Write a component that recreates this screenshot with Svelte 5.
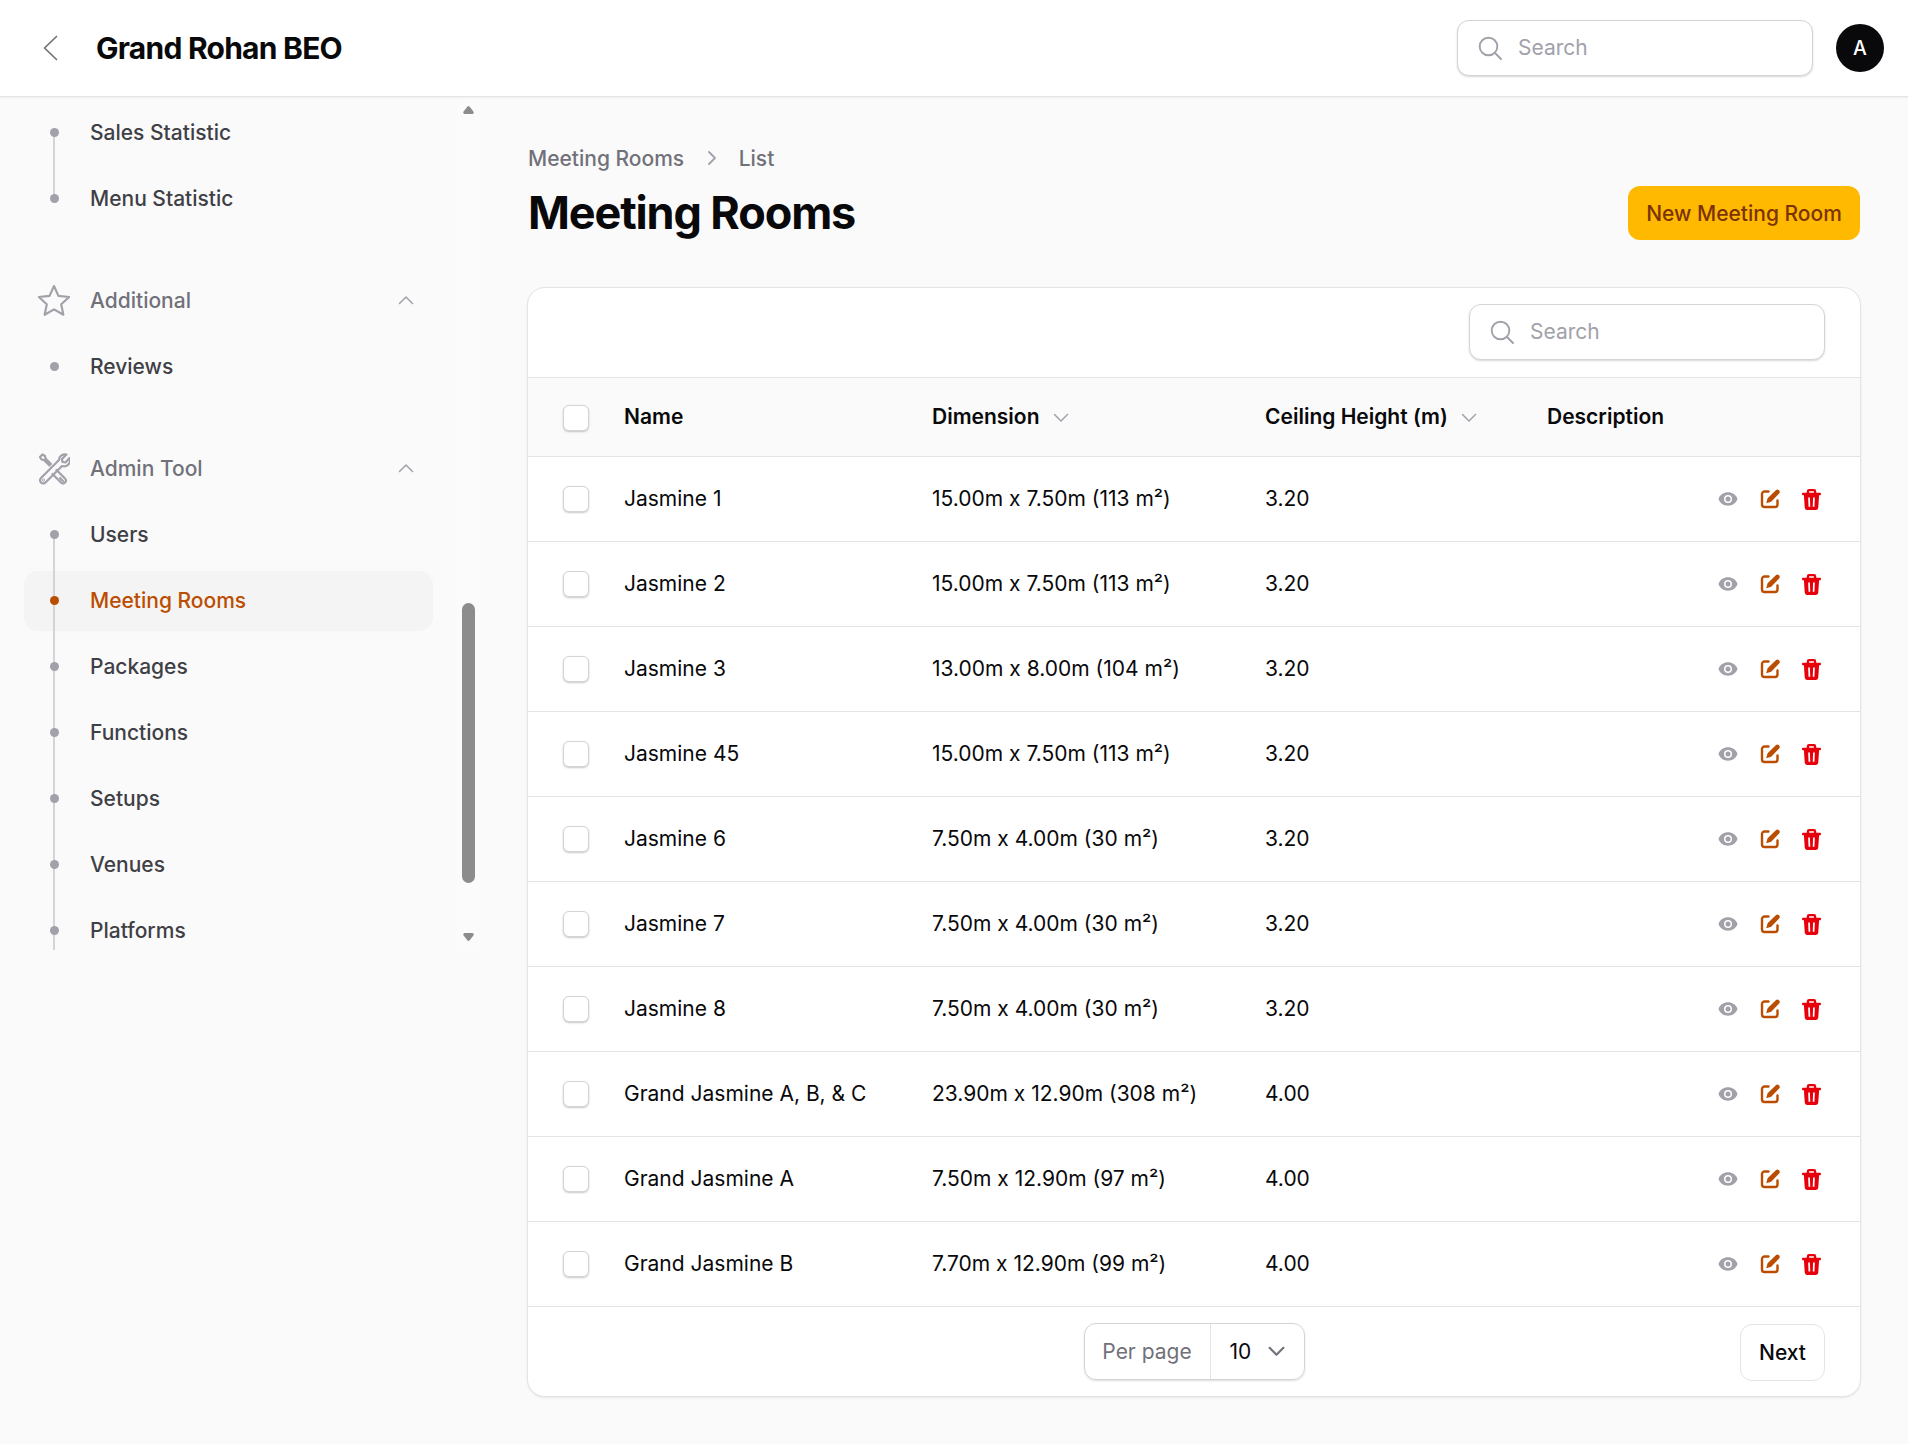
<script>
  const groups = [
    { items: ['Sales Statistic', 'Menu Statistic'] },
    { label: 'Additional', icon: 'star', items: ['Reviews'] },
    { label: 'Admin Tool', icon: 'tool', items: ['Users', 'Meeting Rooms', 'Packages', 'Functions', 'Setups', 'Venues', 'Platforms'], more: true }
  ];
  const rows = [
    ['Jasmine 1', '15.00m x 7.50m (113 m²)', '3.20'],
    ['Jasmine 2', '15.00m x 7.50m (113 m²)', '3.20'],
    ['Jasmine 3', '13.00m x 8.00m (104 m²)', '3.20'],
    ['Jasmine 45', '15.00m x 7.50m (113 m²)', '3.20'],
    ['Jasmine 6', '7.50m x 4.00m (30 m²)', '3.20'],
    ['Jasmine 7', '7.50m x 4.00m (30 m²)', '3.20'],
    ['Jasmine 8', '7.50m x 4.00m (30 m²)', '3.20'],
    ['Grand Jasmine A, B, & C', '23.90m x 12.90m (308 m²)', '4.00'],
    ['Grand Jasmine A', '7.50m x 12.90m (97 m²)', '4.00'],
    ['Grand Jasmine B', '7.70m x 12.90m (99 m²)', '4.00']
  ];
</script>

{#snippet searchBox()}
  <div class="search">
    <svg class="search-icon" viewBox="0 0 24 24" fill="none" stroke="currentColor" stroke-width="1.9" stroke-linecap="round"><circle cx="10.5" cy="10.5" r="8.8" /><path d="M17 17l6 6" /></svg>
    <span>Search</span>
  </div>
{/snippet}

{#snippet chevron(cls)}
  <svg class={cls} viewBox="0 0 16 10" fill="none" stroke="currentColor" stroke-width="1.5" stroke-linecap="round" stroke-linejoin="round"><path d="M1.5 1.5L8 8l6.5-6.5" /></svg>
{/snippet}

<div class="page">
  <header class="topbar">
    <svg class="back" viewBox="0 0 15 26" fill="none" stroke="currentColor" stroke-width="1.7" stroke-linecap="round" stroke-linejoin="round"><path d="M13.500 1.500L1.500 13l12 11.500" /></svg>
    <div class="brand">Grand Rohan BEO</div>
    <div class="topbar-right">
      {@render searchBox()}
      <div class="avatar">A</div>
    </div>
  </header>

  <div class="body">
    <aside class="sidebar">
      <nav class="nav">
        {#each groups as g}
          <div class="group">
            {#if g.label}
              <div class="group-label">
                {#if g.icon === 'star'}
                  <svg class="group-icon star" viewBox="0 0 30 30" fill="none" stroke="currentColor" stroke-width="1.8" stroke-linejoin="round"><path d="M15 2.500l3.700 8.200 8.900 1-6.600 6 1.800 8.800-7.800-4.500-7.800 4.500 1.800-8.800-6.600-6 8.900-1z" /></svg>
                {:else}
                  <svg class="group-icon" viewBox="0 0 32 32" fill="none" stroke="currentColor" stroke-width="2.200" stroke-linejoin="round" stroke-linecap="round"><path d="M13 11L7.500 5.500 7 3 4.500 1.500 2 4l1.500 2.500 2.500.5L11.500 12.500" /><path d="M18.500 17l8.500 8.500a2.800 2.800 0 0 1-4 4l-8.500-8.500" /><path d="M22 25l3 3" /><path d="M21 7a6 6 0 0 1 7.500-5.500L24 6l.5 3 3 .5 4-4.500A6 6 0 0 1 24 13L7.500 29.500a2.800 2.800 0 0 1-4.500-4.500L20 8z" /><circle cx="5.500" cy="27" r=".4" /></svg>
                {/if}
                <span class="group-text">{g.label}</span>
                {@render chevron('group-chevron')}
              </div>
            {/if}
            {#each g.items as item, i}
              {@const notLast = i < g.items.length - 1 || g.more}
              <div class="item" class:active={item === 'Meeting Rooms'}>
                {#if g.items.length > 1}
                  <i class="line" class:first={i === 0} class:last={!notLast}></i>
                {/if}
                <i class="dot"></i>
                <span>{item}</span>
              </div>
            {/each}
          </div>
        {/each}
      </nav>
      <div class="scrollbar">
        <svg class="arrow up" viewBox="0 0 11 8"><path d="M5.500 1.600L9.200 6.500H1.800z" fill="#8c8c8c" stroke="#8c8c8c" stroke-width="3" stroke-linejoin="round" /></svg>
        <i class="thumb"></i>
        <svg class="arrow down" viewBox="0 0 11 8"><path d="M5.500 6.400L9.200 1.500H1.800z" fill="#8c8c8c" stroke="#8c8c8c" stroke-width="3" stroke-linejoin="round" /></svg>
      </div>
    </aside>

    <main class="main">
      <div class="crumbs">
        <span>Meeting Rooms</span>
        <svg viewBox="0 0 10 16" fill="none" stroke="currentColor" stroke-width="1.8" stroke-linecap="round" stroke-linejoin="round"><path d="M2 2l6 6-6 6" /></svg>
        <span>List</span>
      </div>
      <div class="title-row">
        <h1>Meeting Rooms</h1>
        <button class="primary">New Meeting Room</button>
      </div>

      <section class="card">
        <div class="card-top">{@render searchBox()}</div>
        <div class="row head">
          <div class="check-cell"><i class="check"></i></div>
          <div class="txt">Name</div>
          <div class="txt sort">Dimension {@render chevron('sort-chevron')}</div>
          <div class="txt sort">Ceiling Height (m) {@render chevron('sort-chevron')}</div>
          <div class="txt">Description</div>
          <div></div>
        </div>
        {#each rows as r}
          <div class="row">
            <div class="check-cell"><i class="check"></i></div>
            <div class="txt">{r[0]}</div>
            <div class="txt">{r[1]}</div>
            <div class="txt">{r[2]}</div>
            <div></div>
            <div class="actions">
              <svg class="eye" viewBox="0 0 20 20" fill="currentColor"><path d="M10 12.500a2.500 2.500 0 1 0 0-5 2.500 2.500 0 0 0 0 5z" /><path fill-rule="evenodd" d="M.66 10.590a1.600 1.600 0 0 1 0-1.180C2.080 5.800 5.740 3.250 10 3.250s7.920 2.550 9.340 6.160c.15.380.15.800 0 1.180-1.420 3.610-5.080 6.160-9.340 6.160S2.080 14.200.66 10.590zM14 10a4 4 0 1 1-8 0 4 4 0 0 1 8 0z" clip-rule="evenodd" /></svg>
              <svg class="edit" viewBox="0 0 20 20"><path fill="none" stroke="currentColor" stroke-width="2.400" stroke-linecap="round" d="M8.500 2.500H4.500A2.500 2.500 0 0 0 2 5v10.500A2.500 2.500 0 0 0 4.500 18h10.500a2.500 2.500 0 0 0 2.500-2.500V11.500" /><path fill="currentColor" d="M15.800 1.300a2.300 2.300 0 0 1 3.300 3.200l-7.900 8.300-5 1.500 1.400-5.100z" /></svg>
              <svg class="trash" viewBox="0 0 20 22"><path fill="currentColor" fill-rule="evenodd" d="M7.500 0h5a2.500 2.500 0 0 1 2.500 2.500V4h4a1 1 0 0 1 1 1v.500a1 1 0 0 1-1 1h-1l-.9 13a2.500 2.500 0 0 1-2.500 2.500H5.400a2.500 2.500 0 0 1-2.500-2.500L2 6.500H1a1 1 0 0 1-1-1V5a1 1 0 0 1 1-1h4V2.500A2.500 2.500 0 0 1 7.500 0zM7.500 2.300V4h5V2.300zM6.500 9l.4 9.500h1.800L8.300 9zM11.700 9l-.4 9.500h1.800l.4-9.500z" /></svg>
            </div>
          </div>
        {/each}
        <div class="pager">
          <div class="perpage">
            <span class="perpage-label">Per page</span>
            <span class="perpage-value">10 {@render chevron('pp-chevron')}</span>
          </div>
          <button class="next">Next</button>
        </div>
      </section>
    </main>
  </div>
</div>

<style>
  :global(body) {
    margin: 0;
    background: #fafafa;
    font-family: Inter, "Liberation Sans", sans-serif;
    font-size: 21px;
    color: #09090b;
  }
  .page { width: 1908px; height: 1444px; overflow: hidden; }
  .topbar {
    height: 96px;
    background: #fff;
    border-bottom: 1px solid #e4e4e7;
    box-shadow: 0 1px 2px rgba(0, 0, 0, .05);
    display: flex;
    align-items: center;
    padding: 0 24px 0 43px;
    position: relative;
    z-index: 2;
  }
  .back { width: 15px; height: 26px; color: #71717a; margin-right: 38px; }
  .brand { font-size: 30px; font-weight: 700; letter-spacing: -.025em; color: #09090b; }
  .topbar-right { margin-left: auto; display: flex; align-items: center; gap: 23px; }
  .search {
    box-sizing: border-box;
    width: 356px;
    height: 56px;
    background: #fff;
    border: 1px solid #d4d4d8;
    border-radius: 12px;
    box-shadow: 0 1px 2px rgba(0, 0, 0, .16);
    display: flex;
    align-items: center;
    padding-left: 20px;
    gap: 16px;
    color: #a1a1aa;
  }
  .search span { position: relative; top: -1px; }
  .search-icon { width: 24px; height: 24px; flex: none; }
  .avatar {
    width: 48px; height: 48px; border-radius: 50%;
    background: #09090b; color: #fff;
    display: flex; align-items: center; justify-content: center;
    font-size: 19.500px; font-weight: 500;
  }

  .body { display: flex; }
  .sidebar { width: 480px; height: 853px; flex: none; position: relative; overflow: hidden; }
  .nav { display: flex; flex-direction: column; gap: 42px; padding: 6px 24px 0; width: 409px; }
  .group { display: flex; flex-direction: column; gap: 6px; }
  .group-label {
    height: 60px; display: flex; align-items: center;
    padding-left: 66px; position: relative;
    color: #71717a; font-weight: 500;
  }
  .group-icon { position: absolute; left: 14px; top: 14px; width: 32px; height: 32px; color: #a1a1aa; }
  .group-icon.star { left: 12px; top: 12px; width: 36px; height: 36px; }
  .group-text { flex: 1; position: relative; top: -1px; }
  :global(.group-chevron) { width: 16px; height: 10px; color: #a1a1aa; margin-right: 19px; transform: rotate(180deg); position: relative; top: -1px; }
  .item {
    height: 60px; display: flex; align-items: center;
    padding-left: 66px; position: relative;
    color: #3f3f46; font-weight: 500; border-radius: 14px;
  }
  .item span { position: relative; top: -1px; }
  .item.active { background: #f4f4f5; color: #bb4d00; }
  .dot {
    position: absolute; left: 26px; top: 25px;
    width: 9px; height: 9px; border-radius: 50%;
    background: #a1a1aa;
  }
  .active .dot { background: #bb4d00; }
  .line {
    position: absolute; left: 29px; top: -6px; bottom: -6px; width: 2px;
    background: #d4d4d8;
  }
  .line.first { top: 30px; }
  .line.last { bottom: 30px; }
  .scrollbar { position: absolute; right: 0; top: 0; bottom: 0; width: 23px; background: #fbfbfb; }
  .thumb { position: absolute; left: 5px; top: 506px; width: 13px; height: 280px; border-radius: 7px; background: #8c8c8c; }
  .arrow { position: absolute; left: 6px; width: 11px; height: 8px; overflow: visible; }
  .arrow.up { top: 9px; }
  .arrow.down { top: 836px; }

  .main { flex: 1; padding: 0 48px; min-width: 0; }
  .crumbs {
    display: flex; align-items: center; gap: 23px;
    color: #71717a; font-weight: 500;
    height: 30px; margin-top: 46px;
  }
  .crumbs svg { width: 10px; height: 16px; color: #a1a1aa; margin-right: -1.500px; }
  .title-row { display: flex; align-items: center; justify-content: space-between; margin-top: 5px; height: 70px; }
  h1 { margin: 0; font-size: 45px; line-height: 60px; font-weight: 700; letter-spacing: -.025em; color: #09090b; }
  .primary {
    height: 54px; width: 232px; border: 0; border-radius: 12px;
    background: #ffb900; color: #7b3306;
    font: 500 21px Inter, sans-serif;
  }
  .card {
    margin: 39px -1px 0; height: 1110px; box-sizing: border-box;
    background: #fff; border: 1px solid #e4e4e7; border-radius: 18px;
    box-shadow: 0 1px 2px rgba(0, 0, 0, .08);
    overflow: hidden;
  }
  .card-top { height: 89px; box-sizing: border-box; padding: 16px 35px 0 0; display: flex; align-items: flex-start; justify-content: flex-end; }
  .row {
    display: grid;
    grid-template-columns: 96px 308px 333px 282px 1fr 150px;
    height: 85px; box-sizing: border-box;
    align-items: center;
    border-top: 1px solid #e4e4e7;
    color: #09090b;
  }
  .row.head { height: 79px; background: #fafafa; font-weight: 600; }
  .row.head .check-cell { position: relative; top: 1px; }
  .txt { position: relative; top: -1px; }
  .check-cell { padding-left: 35px; display: flex; }
  .check {
    width: 26px; height: 26px; box-sizing: border-box; border-radius: 6px;
    background: #fff; border: 1px solid #d4d4d8;
    box-shadow: 0 1px 2px rgba(0, 0, 0, .22);
  }
  .sort { display: flex; align-items: center; gap: 13px; }
  :global(.sort-chevron) { width: 16px; height: 10px; color: #a1a1aa; position: relative; top: 2px; }
  .actions { display: flex; justify-content: flex-end; align-items: center; gap: 22px; padding-right: 39px; }
  .actions svg { flex: none; }
  .eye { width: 20px; height: 20px; color: #a1a1aa; }
  .edit { width: 20px; height: 20px; color: #bb4d00; }
  .trash { width: 19px; height: 21px; color: #e7000b; }
  .pager { position: relative; height: 90px; border-top: 1px solid #e4e4e7; box-sizing: border-box; display: flex; align-items: center; justify-content: center; }
  .perpage {
    box-sizing: border-box; height: 57px; width: 221px;
    display: flex; align-items: stretch;
    border: 1px solid #d4d4d8; border-radius: 12px;
    box-shadow: 0 1px 2px rgba(0, 0, 0, .14);
  }
  .perpage-label { width: 126px; box-sizing: border-box; border-right: 1px solid #e4e4e7; display: flex; align-items: center; justify-content: center; color: #71717a; }
  .perpage-value { flex: 1; display: flex; align-items: center; padding-left: 19px; gap: 17px; }
  :global(.pp-chevron) { width: 17px; height: 11px; color: #71717a; stroke-width: 2; }
  .next {
    position: absolute; right: 35px; top: 17px;
    height: 57px; width: 85px; background: #fff;
    border: 1px solid #e4e4e7; border-radius: 12px;
    font: 500 21px Inter, sans-serif; color: #09090b;
  }
</style>
